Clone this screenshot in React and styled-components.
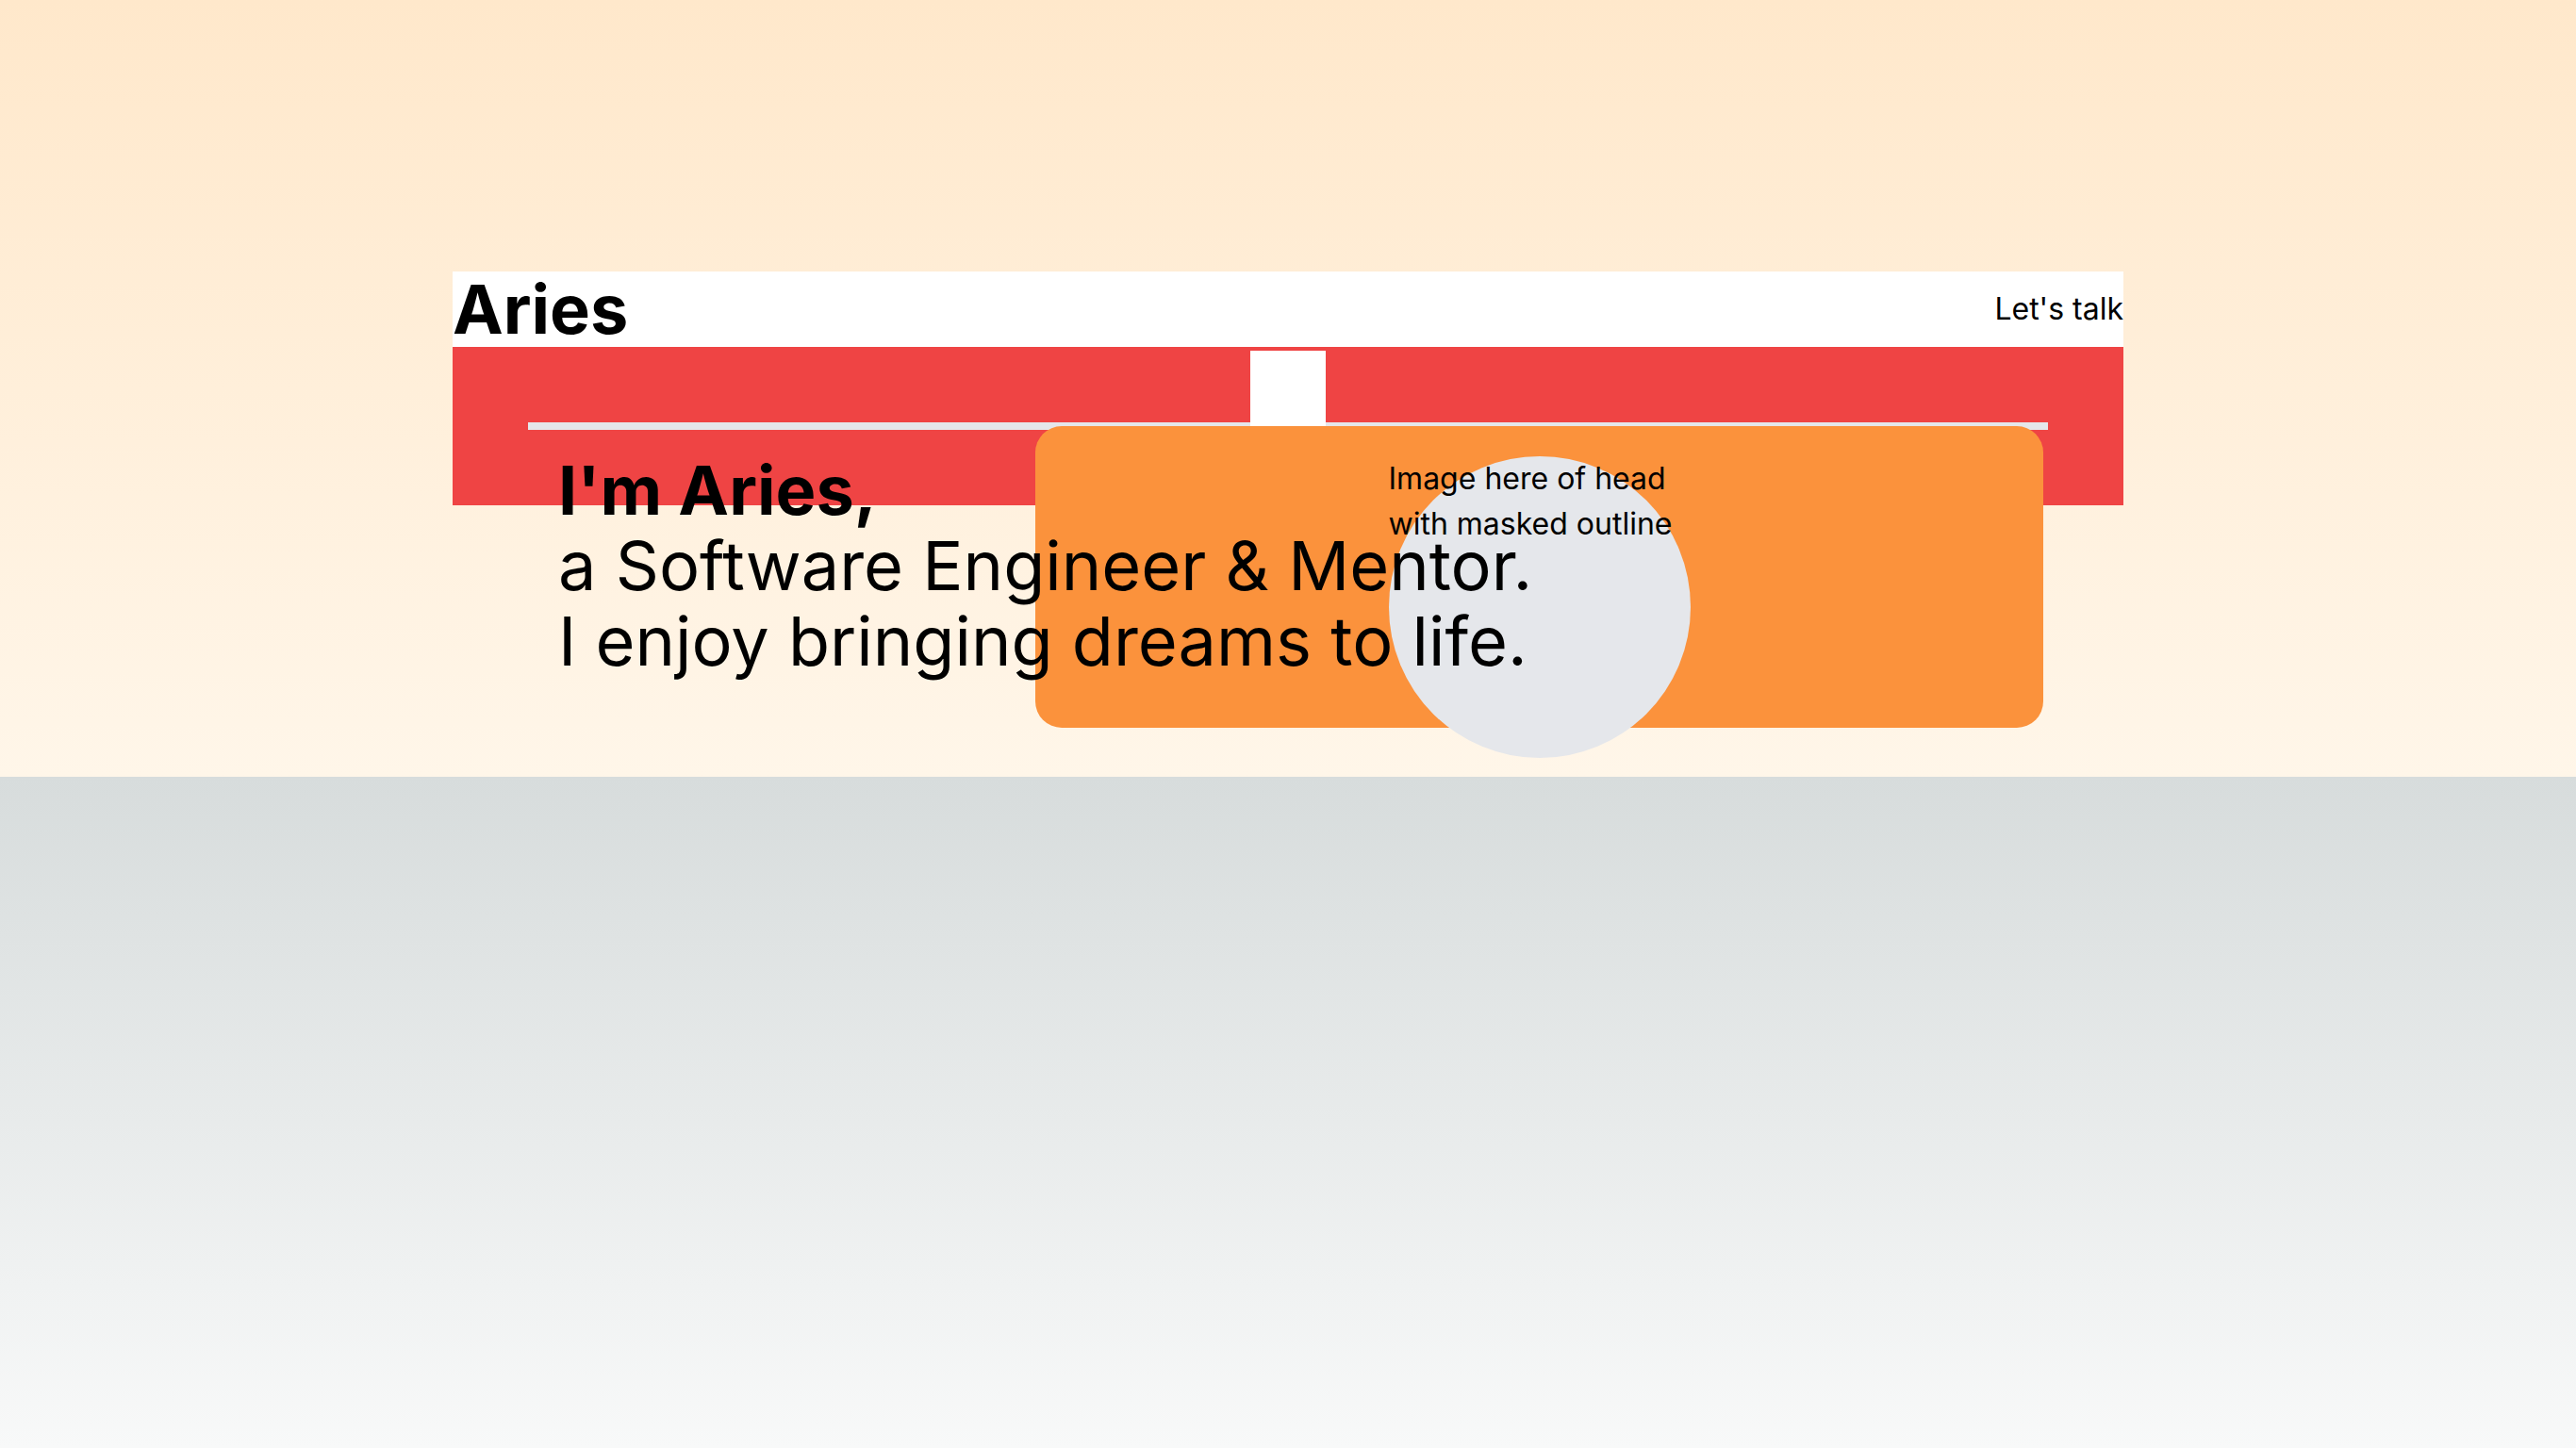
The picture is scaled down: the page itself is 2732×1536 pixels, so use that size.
import styled, { createGlobalStyle } from "styled-components";

const GlobalStyle = createGlobalStyle`
  html, body {
    margin: 0;
    padding: 0;
  }
  body {
    font-family: Inter, "Noto Sans", sans-serif;
    color: #000;
  }
  * {
    box-sizing: border-box;
  }
`;

const Top = styled.section`
  height: 824px;
  padding-top: 288px;
  background: linear-gradient(180deg, #ffe8cb 0%, #fff6e9 100%);
`;

const Bottom = styled.section`
  height: 712px;
  background: linear-gradient(180deg, #d7dcdc 0%, #f8f9f9 100%);
`;

const Container = styled.div`
  width: 1772px;
  margin: 0 auto;
`;

const Header = styled.header`
  height: 80px;
  background: #fff;
  display: flex;
  align-items: center;
  justify-content: space-between;
`;

const Logo = styled.h1`
  margin: 0;
  font-size: 72px;
  line-height: 72px;
  font-weight: 700;
`;

const TalkLink = styled.a`
  font-size: 32px;
  line-height: 48px;
  color: #000;
  text-decoration: none;
`;

const Band = styled.div`
  height: 168px;
  background: #ef4444;
  display: flex;
  flex-direction: column;
`;

const Square = styled.div`
  width: 80px;
  height: 80px;
  margin-top: 4px;
  align-self: center;
  background: #fff;
  position: relative;
  z-index: 1;
`;

const Rule = styled.div`
  height: 8px;
  margin: -4px 80px 0;
  background: #e5e7eb;
`;

const Hero = styled.div`
  display: flex;
  margin: -84px 85px 0 112px;
`;

const Intro = styled.div`
  flex: 1;
  min-width: 0;
  padding-top: 28px;
  position: relative;
  z-index: 2;
  white-space: nowrap;
  font-size: 72px;
  line-height: 80px;
`;

const Line = styled.div`
  font-weight: ${(p) => (p.$bold ? 700 : 400)};
`;

const Card = styled.div`
  width: 1069px;
  height: 320px;
  flex-shrink: 0;
  border-radius: 28px;
  background: #fb923c;
  display: flex;
  justify-content: center;
  padding-top: 32px;
`;

const Head = styled.div`
  width: 320px;
  height: 320px;
  flex-shrink: 0;
  border-radius: 50%;
  background: #e5e7eb;
  font-size: 32px;
  line-height: 48px;
  white-space: nowrap;
`;

export default function App() {
  return (
    <>
      <GlobalStyle />
      <Top>
        <Container>
          <Header>
            <Logo>Aries</Logo>
            <TalkLink href="#contact">Let's talk</TalkLink>
          </Header>
          <Band>
            <Square />
            <Rule />
          </Band>
          <Hero>
            <Intro>
              <Line $bold>I'm Aries,</Line>
              <Line>a Software Engineer &amp; Mentor.</Line>
              <Line>I enjoy bringing dreams to life.</Line>
            </Intro>
            <Card>
              <Head>
                Image here of head
                <br />
                with masked outline
              </Head>
            </Card>
          </Hero>
        </Container>
      </Top>
      <Bottom />
    </>
  );
}
